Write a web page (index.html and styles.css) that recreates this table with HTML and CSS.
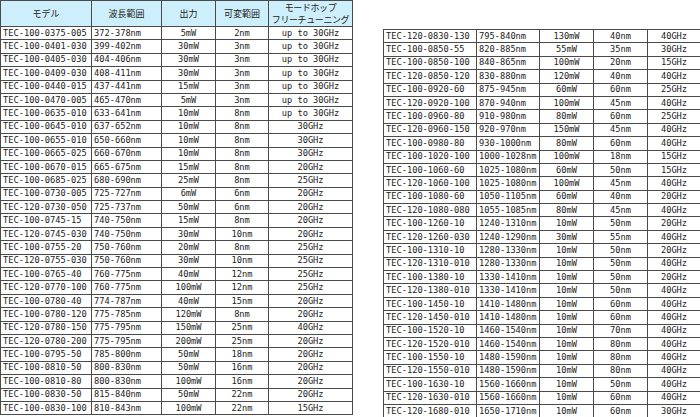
FILE: index.html
```html
<!DOCTYPE html>
<html lang="ja">
<head>
<meta charset="utf-8">
<title>TEC</title>
<link rel="stylesheet" href="styles.css">
</head>
<body>
<div class="page">
  <table class="spec spec-left">
    <colgroup><col class="c1"><col class="c2"><col class="c3"><col class="c4"><col class="c5"></colgroup>
    <thead>
      <tr><th>モデル</th><th>波長範囲</th><th>出力</th><th>可変範囲</th><th class="two">モードホップ<br>フリーチューニング</th></tr>
    </thead>
    <tbody>
      <tr><td>TEC-100-0375-005</td><td>372-378nm</td><td class="ctr">5mW</td><td class="ctr">2nm</td><td class="ctr">up to 30GHz</td></tr>
      <tr><td>TEC-100-0401-030</td><td>399-402nm</td><td class="ctr">30mW</td><td class="ctr">3nm</td><td class="ctr">up to 30GHz</td></tr>
      <tr><td>TEC-100-0405-030</td><td>404-406nm</td><td class="ctr">30mW</td><td class="ctr">3nm</td><td class="ctr">up to 30GHz</td></tr>
      <tr><td>TEC-100-0409-030</td><td>408-411nm</td><td class="ctr">30mW</td><td class="ctr">3nm</td><td class="ctr">up to 30GHz</td></tr>
      <tr><td>TEC-100-0440-015</td><td>437-441nm</td><td class="ctr">15mW</td><td class="ctr">3nm</td><td class="ctr">up to 30GHz</td></tr>
      <tr><td>TEC-100-0470-005</td><td>465-470nm</td><td class="ctr">5mW</td><td class="ctr">3nm</td><td class="ctr">up to 30GHz</td></tr>
      <tr><td>TEC-100-0635-010</td><td>633-641nm</td><td class="ctr">10mW</td><td class="ctr">8nm</td><td class="ctr">up to 30GHz</td></tr>
      <tr><td>TEC-100-0645-010</td><td>637-652nm</td><td class="ctr">10mW</td><td class="ctr">8nm</td><td class="ctr">30GHz</td></tr>
      <tr><td>TEC-100-0655-010</td><td>650-660nm</td><td class="ctr">10mW</td><td class="ctr">8nm</td><td class="ctr">30GHz</td></tr>
      <tr><td>TEC-100-0665-025</td><td>660-670nm</td><td class="ctr">10mW</td><td class="ctr">8nm</td><td class="ctr">30GHz</td></tr>
      <tr><td>TEC-100-0670-015</td><td>665-675nm</td><td class="ctr">15mW</td><td class="ctr">8nm</td><td class="ctr">20GHz</td></tr>
      <tr><td>TEC-100-0685-025</td><td>680-690nm</td><td class="ctr">25mW</td><td class="ctr">8nm</td><td class="ctr">25GHz</td></tr>
      <tr><td>TEC-100-0730-005</td><td>725-727nm</td><td class="ctr">6mW</td><td class="ctr">6nm</td><td class="ctr">20GHz</td></tr>
      <tr><td>TEC-120-0730-050</td><td>725-737nm</td><td class="ctr">50mW</td><td class="ctr">6nm</td><td class="ctr">20GHz</td></tr>
      <tr><td>TEC-100-0745-15</td><td>740-750nm</td><td class="ctr">15mW</td><td class="ctr">8nm</td><td class="ctr">20GHz</td></tr>
      <tr><td>TEC-120-0745-030</td><td>740-750nm</td><td class="ctr">30mW</td><td class="ctr">10nm</td><td class="ctr">20GHz</td></tr>
      <tr><td>TEC-100-0755-20</td><td>750-760nm</td><td class="ctr">20mW</td><td class="ctr">8nm</td><td class="ctr">25GHz</td></tr>
      <tr><td>TEC-120-0755-030</td><td>750-760nm</td><td class="ctr">30mW</td><td class="ctr">10nm</td><td class="ctr">25GHz</td></tr>
      <tr><td>TEC-100-0765-40</td><td>760-775nm</td><td class="ctr">40mW</td><td class="ctr">12nm</td><td class="ctr">25GHz</td></tr>
      <tr><td>TEC-120-0770-100</td><td>760-775nm</td><td class="ctr">100mW</td><td class="ctr">12nm</td><td class="ctr">25GHz</td></tr>
      <tr><td>TEC-100-0780-40</td><td>774-787nm</td><td class="ctr">40mW</td><td class="ctr">15nm</td><td class="ctr">20GHz</td></tr>
      <tr><td>TEC-100-0780-120</td><td>775-785nm</td><td class="ctr">120mW</td><td class="ctr">8nm</td><td class="ctr">20GHz</td></tr>
      <tr><td>TEC-120-0780-150</td><td>775-795nm</td><td class="ctr">150mW</td><td class="ctr">25nm</td><td class="ctr">40GHz</td></tr>
      <tr><td>TEC-120-0780-200</td><td>775-795nm</td><td class="ctr">200mW</td><td class="ctr">25nm</td><td class="ctr">20GHz</td></tr>
      <tr><td>TEC-100-0795-50</td><td>785-800nm</td><td class="ctr">50mW</td><td class="ctr">18nm</td><td class="ctr">20GHz</td></tr>
      <tr><td>TEC-100-0810-50</td><td>800-830nm</td><td class="ctr">50mW</td><td class="ctr">16nm</td><td class="ctr">20GHz</td></tr>
      <tr><td>TEC-100-0810-80</td><td>800-830nm</td><td class="ctr">100mW</td><td class="ctr">16nm</td><td class="ctr">20GHz</td></tr>
      <tr><td>TEC-100-0830-50</td><td>815-840nm</td><td class="ctr">50mW</td><td class="ctr">22nm</td><td class="ctr">20GHz</td></tr>
      <tr><td>TEC-100-0830-100</td><td>810-843nm</td><td class="ctr">100mW</td><td class="ctr">22nm</td><td class="ctr">15GHz</td></tr>
    </tbody>
  </table>

  <table class="spec spec-right">
    <colgroup><col class="r1"><col class="r2"><col class="r3"><col class="r4"><col class="r5"></colgroup>
    <tbody>
      <tr><td>TEC-120-0830-130</td><td>795-840nm</td><td class="ctr">130mW</td><td class="ctr">40nm</td><td class="ctr">40GHz</td></tr>
      <tr><td>TEC-100-0850-55</td><td>820-885nm</td><td class="ctr">55mW</td><td class="ctr">35nm</td><td class="ctr">30GHz</td></tr>
      <tr><td>TEC-100-0850-100</td><td>840-865nm</td><td class="ctr">100mW</td><td class="ctr">20nm</td><td class="ctr">15GHz</td></tr>
      <tr><td>TEC-120-0850-120</td><td>830-880nm</td><td class="ctr">120mW</td><td class="ctr">40nm</td><td class="ctr">40GHz</td></tr>
      <tr><td>TEC-100-0920-60</td><td>875-945nm</td><td class="ctr">60mW</td><td class="ctr">60nm</td><td class="ctr">25GHz</td></tr>
      <tr><td>TEC-120-0920-100</td><td>870-940nm</td><td class="ctr">100mW</td><td class="ctr">45nm</td><td class="ctr">40GHz</td></tr>
      <tr><td>TEC-100-0960-80</td><td>910-980nm</td><td class="ctr">80mW</td><td class="ctr">60nm</td><td class="ctr">25GHz</td></tr>
      <tr><td>TEC-120-0960-150</td><td>920-970nm</td><td class="ctr">150mW</td><td class="ctr">45nm</td><td class="ctr">40GHz</td></tr>
      <tr><td>TEC-100-0980-80</td><td>930-1000nm</td><td class="ctr">80mW</td><td class="ctr">60nm</td><td class="ctr">40GHz</td></tr>
      <tr><td>TEC-100-1020-100</td><td>1000-1028nm</td><td class="ctr">100mW</td><td class="ctr">18nm</td><td class="ctr">15GHz</td></tr>
      <tr><td>TEC-100-1060-60</td><td>1025-1080nm</td><td class="ctr">60mW</td><td class="ctr">50nm</td><td class="ctr">15GHz</td></tr>
      <tr><td>TEC-120-1060-100</td><td>1025-1080nm</td><td class="ctr">100mW</td><td class="ctr">45nm</td><td class="ctr">40GHz</td></tr>
      <tr><td>TEC-100-1080-60</td><td>1050-1105nm</td><td class="ctr">60mW</td><td class="ctr">40nm</td><td class="ctr">20GHz</td></tr>
      <tr><td>TEC-120-1080-080</td><td>1055-1085nm</td><td class="ctr">80mW</td><td class="ctr">45nm</td><td class="ctr">40GHz</td></tr>
      <tr><td>TEC-100-1260-10</td><td>1240-1310nm</td><td class="ctr">10mW</td><td class="ctr">50nm</td><td class="ctr">20GHz</td></tr>
      <tr><td>TEC-120-1260-030</td><td>1240-1290nm</td><td class="ctr">30mW</td><td class="ctr">55nm</td><td class="ctr">40GHz</td></tr>
      <tr><td>TEC-100-1310-10</td><td>1280-1330nm</td><td class="ctr">10mW</td><td class="ctr">50nm</td><td class="ctr">20GHz</td></tr>
      <tr><td>TEC-120-1310-010</td><td>1280-1330nm</td><td class="ctr">10mW</td><td class="ctr">50nm</td><td class="ctr">40GHz</td></tr>
      <tr><td>TEC-100-1380-10</td><td>1330-1410nm</td><td class="ctr">10mW</td><td class="ctr">50nm</td><td class="ctr">20GHz</td></tr>
      <tr><td>TEC-120-1380-010</td><td>1330-1410nm</td><td class="ctr">10mW</td><td class="ctr">50nm</td><td class="ctr">40GHz</td></tr>
      <tr><td>TEC-100-1450-10</td><td>1410-1480nm</td><td class="ctr">10mW</td><td class="ctr">60nm</td><td class="ctr">40GHz</td></tr>
      <tr><td>TEC-120-1450-010</td><td>1410-1480nm</td><td class="ctr">10mW</td><td class="ctr">60nm</td><td class="ctr">40GHz</td></tr>
      <tr><td>TEC-100-1520-10</td><td>1460-1540nm</td><td class="ctr">10mW</td><td class="ctr">70nm</td><td class="ctr">40GHz</td></tr>
      <tr><td>TEC-120-1520-010</td><td>1460-1540nm</td><td class="ctr">10mW</td><td class="ctr">80nm</td><td class="ctr">40GHz</td></tr>
      <tr><td>TEC-100-1550-10</td><td>1480-1590nm</td><td class="ctr">10mW</td><td class="ctr">80nm</td><td class="ctr">40GHz</td></tr>
      <tr><td>TEC-120-1550-010</td><td>1480-1590nm</td><td class="ctr">10mW</td><td class="ctr">80nm</td><td class="ctr">40GHz</td></tr>
      <tr><td>TEC-100-1630-10</td><td>1560-1660nm</td><td class="ctr">10mW</td><td class="ctr">50nm</td><td class="ctr">40GHz</td></tr>
      <tr><td>TEC-120-1630-010</td><td>1560-1660nm</td><td class="ctr">10mW</td><td class="ctr">60nm</td><td class="ctr">40GHz</td></tr>
      <tr><td>TEC-120-1680-010</td><td>1650-1710nm</td><td class="ctr">10mW</td><td class="ctr">60nm</td><td class="ctr">30GHz</td></tr>
    </tbody>
  </table>
</div>
</body>
</html>
```

FILE: styles.css
```css
html, body {
  margin: 0;
  padding: 0;
  background: #ffffff;
}

.page {
  display: flex;
  align-items: flex-start;
  gap: 30px;
  width: 700px;
  height: 417px;
  overflow: hidden;
}

.spec {
  border-collapse: collapse;
  table-layout: fixed;
  font-family: "DejaVu Sans Mono", "Liberation Mono", monospace;
  font-size: 8.7px;
  color: #222;
}

.spec td,
.spec th {
  border: 1px solid #4a4a4a;
  padding: 0 0 0 2px;
  height: 12.4px;
  line-height: 11px;
  white-space: nowrap;
  overflow: hidden;
  text-align: left;
  vertical-align: middle;
}

.spec th {
  height: 25px;
  padding: 0;
  background: #cdeefb;
  font-family: "Noto Sans CJK JP", "Noto Sans", sans-serif;
  font-size: 9px;
  font-weight: normal;
  line-height: 11.5px;
  text-align: center;
}

.spec th.two {
  letter-spacing: -0.4px;
}

.spec td.ctr {
  text-align: center;
  padding-left: 0;
}

.spec-left { width: 352px; }
.c1 { width: 91px; }
.c2 { width: 70px; }
.c3 { width: 54px; }
.c4 { width: 53px; }
.c5 { width: 84px; }

.spec-right {
  width: 317px;
  margin-top: 29px;
}
.r1 { width: 93px; }
.r2 { width: 63px; }
.r3 { width: 54px; }
.r4 { width: 54px; }
.r5 { width: 53px; }
```
